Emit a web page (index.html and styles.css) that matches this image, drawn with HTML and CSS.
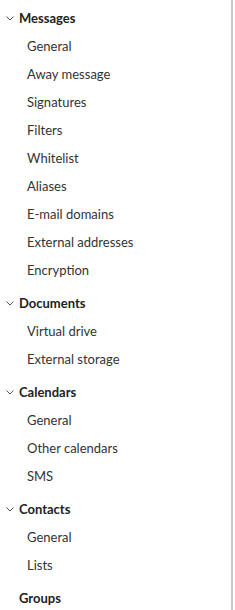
FILE: index.html
```html
<!DOCTYPE html>
<html>
<head>
<meta charset="utf-8">
<link rel="stylesheet" href="styles.css">
</head>
<body>
<nav class="sidebar">
  <div class="group">
    <div class="head"><svg class="chev" viewBox="0 0 10 10"><path d="M1.5 3.5 L5 7 L8.5 3.5"/></svg><span>Messages</span></div>
    <div class="item">General</div>
    <div class="item">Away message</div>
    <div class="item">Signatures</div>
    <div class="item">Filters</div>
    <div class="item">Whitelist</div>
    <div class="item">Aliases</div>
    <div class="item">E-mail domains</div>
    <div class="item">External addresses</div>
    <div class="item">Encryption</div>
  </div>
  <div class="group">
    <div class="head"><svg class="chev" viewBox="0 0 10 10"><path d="M1.5 3.5 L5 7 L8.5 3.5"/></svg><span>Documents</span></div>
    <div class="item">Virtual drive</div>
    <div class="item">External storage</div>
  </div>
  <div class="group">
    <div class="head"><svg class="chev" viewBox="0 0 10 10"><path d="M1.5 3.5 L5 7 L8.5 3.5"/></svg><span>Calendars</span></div>
    <div class="item">General</div>
    <div class="item">Other calendars</div>
    <div class="item">SMS</div>
  </div>
  <div class="group">
    <div class="head"><svg class="chev" viewBox="0 0 10 10"><path d="M1.5 3.5 L5 7 L8.5 3.5"/></svg><span>Contacts</span></div>
    <div class="item">General</div>
    <div class="item">Lists</div>
  </div>
  <div class="group">
    <div class="head nochev"><span>Groups</span></div>
  </div>
</nav>
</body>
</html>
```
FILE: styles.css
```css
html, body {
  margin: 0;
  padding: 0;
  background: #fff;
}
.sidebar {
  width: 233px;
  height: 610px;
  box-sizing: border-box;
  border-right: 2px solid #c9c9c9;
  font-family: Lato, "Open Sans", sans-serif;
  font-size: 13px;
  color: #333;
  padding-top: 4px;
  overflow: hidden;
}
.group + .group {
  margin-top: 5px;
}
.head {
  height: 28px;
  display: flex;
  align-items: center;
  padding-left: 5px;
  font-weight: 700;
  color: #222;
}
.head.nochev {
  padding-left: 19px;
}
.chev {
  width: 10px;
  height: 10px;
  margin-right: 4px;
  fill: none;
  stroke: #555;
  stroke-width: 1;
}
.item {
  height: 28px;
  display: flex;
  align-items: center;
  padding-left: 27px;
}
```
